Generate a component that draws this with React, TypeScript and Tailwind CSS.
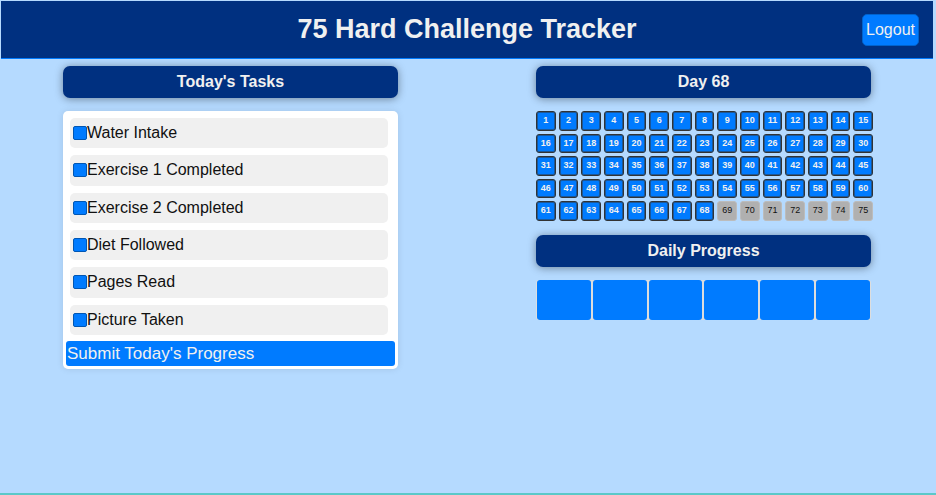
import { useState } from "react";

const TASKS = [
  "Water Intake",
  "Exercise 1 Completed",
  "Exercise 2 Completed",
  "Diet Followed",
  "Pages Read",
  "Picture Taken",
];
const TOTAL_DAYS = 75;
const CURRENT_DAY = 68;

function PanelTitle({ children }: { children: React.ReactNode }) {
  return (
    <h2 className="flex h-8 items-center justify-center rounded-[7px] bg-[#003080] text-base font-bold text-[#f0f0f0] shadow-[0_1px_8px_rgba(0,0,0,0.4)]">
      {children}
    </h2>
  );
}

function TaskRow({ label }: { label: string }) {
  const [done, setDone] = useState(true);
  return (
    <li className="flex items-center rounded-[5px] bg-[#f0f0f0] pl-[3px]">
      <label className="flex items-center">
        <input
          type="checkbox"
          checked={done}
          onChange={() => setDone(!done)}
          className="size-[14px] appearance-none rounded-[2px] border border-[#0056b3] bg-white checked:bg-[#007bff]"
        />
        {label}
      </label>
    </li>
  );
}

function DayCell({ day }: { day: number }) {
  const done = day <= CURRENT_DAY;
  return (
    <li
      className={
        done
          ? "flex items-center justify-center rounded-[3px] border border-[#333333] bg-[#007bff] text-[9px] font-bold text-[#f0f0f0] ring-1 ring-inset ring-[#333333]/50"
          : "flex items-center justify-center rounded-[3px] border border-[#bcbcbc] bg-[#b0b0b0] text-[9px] text-[#111111]"
      }
    >
      {day}
    </li>
  );
}

export default function App() {
  const days = Array.from({ length: TOTAL_DAYS }, (_, i) => i + 1);
  return (
    <div className="flex min-h-screen flex-col border-b-2 border-[#5bc8c8] bg-[#b5daff] font-['Liberation_Sans',Arial,sans-serif] text-base text-[#111111]">
      <header className="mt-px mr-[3px] ml-px grid h-[58px] grid-cols-[1fr_auto_1fr] items-center border-b border-[#007bff] bg-[#003080] pr-[14px]">
        <h1 className="col-start-2 pl-[14px] text-[27px] font-bold text-[#f0f0f0]">75 Hard Challenge Tracker</h1>
        <button
          type="button"
          className="h-8 justify-self-end rounded-[5px] border border-[#0062cc] bg-[#007bff] px-[3px] text-base text-[#f0f0f0]"
        >
          Logout
        </button>
      </header>

      <main className="grid grid-cols-2 gap-[138px] pt-[7px] pr-[65px] pl-[63px]">
        <section>
          <PanelTitle>Today's Tasks</PanelTitle>
          <form
            onSubmit={(e) => e.preventDefault()}
            className="mt-[13px] rounded-[5px] bg-white p-[3px] pt-[7px] shadow-[0_0_7px_rgba(0,0,0,0.1)]"
          >
            <ul className="mr-[7px] ml-[4px] grid h-[217px] grid-rows-6 gap-[7px]">
              {TASKS.map((task) => (
                <TaskRow key={task} label={task} />
              ))}
            </ul>
            <button
              type="submit"
              className="mt-[6px] block h-[25px] w-full rounded-[3px] bg-[#007bff] pl-px text-left text-[17px] text-[#f0f0f0]"
            >
              Submit Today's Progress
            </button>
          </form>
        </section>

        <section>
          <PanelTitle>Day {CURRENT_DAY}</PanelTitle>
          <ol className="mt-[13px] -mr-[2px] grid h-[110px] grid-cols-15 grid-rows-5 gap-[3px]">
            {days.map((day) => (
              <DayCell key={day} day={day} />
            ))}
          </ol>
          <div className="mt-[14px]">
            <PanelTitle>Daily Progress</PanelTitle>
          </div>
          <ul className="mt-[13px] grid h-10 grid-cols-6 overflow-hidden rounded-[3px] bg-[#dddddd]">
            {TASKS.map((task) => (
              <li key={task} className="mx-px rounded-[3px] bg-[#007bff]" />
            ))}
          </ul>
        </section>
      </main>
    </div>
  );
}
